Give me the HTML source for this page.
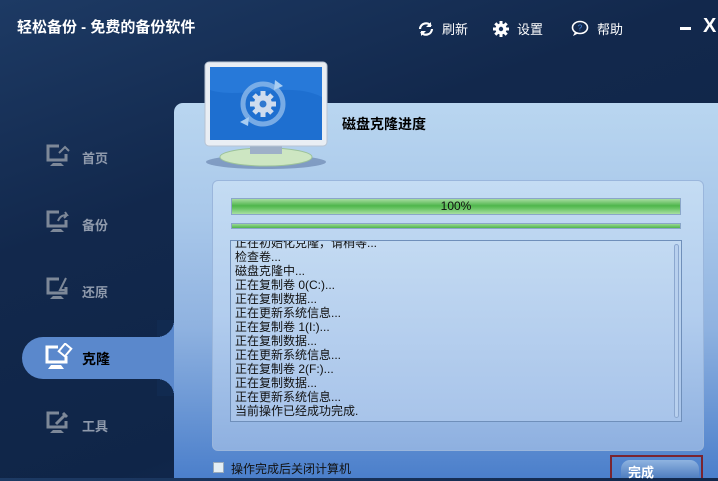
<!DOCTYPE html>
<html><head><meta charset="utf-8"><style>
*{margin:0;padding:0;box-sizing:border-box}
body{width:718px;height:478px;overflow:hidden;position:relative;font-family:"Liberation Sans","Noto Sans CJK SC","WenQuanYi Zen Hei",sans-serif;background:linear-gradient(160deg,#1d3a64 0%,#12284c 35%,#0f2548 70%,#183462 100%)}
.a{position:absolute}
.title{left:17px;top:16px;color:#fff;font-size:15px;font-weight:bold}
.tb{top:19px;color:#fff;font-size:13px}
.panel{left:174px;top:103px;width:544px;height:375px;border-radius:9px 0 0 0;background:linear-gradient(180deg,#b9d6f0 0%,#a9c8ea 30%,#8fb2e0 60%,#4b7fcb 100%)}
.inner{left:212px;top:180px;width:492px;height:271px;border-radius:6px;background:linear-gradient(180deg,#c4dcf3 0%,#b2cdee 50%,#8eb0e0 100%);border:1px solid #9ab6dc}
.nav{left:47px;color:#8f9aac;font-size:13px;font-weight:bold}
.log{left:230px;top:240px;width:452px;height:182px;border:1px solid #6f8fba;background:linear-gradient(180deg,#c3daf2,#a8c4ea);overflow:hidden}
.log div{font-size:12px;line-height:14px;color:#111;padding-left:4px;white-space:nowrap}
</style></head><body>
<div class="a title">轻松备份 - 免费的备份软件</div>
<svg class="a" style="left:417px;top:20px" width="18" height="18" viewBox="0 0 18 18"><path d="M3 9a6 6 0 0 1 11-3M15 9a6 6 0 0 1-11 3" stroke="#fff" stroke-width="2.2" fill="none"/><path d="M14 2v5h-5z M4 16v-5h5z" fill="#fff"/></svg>
<div class="a tb" style="left:442px">刷新</div>
<svg class="a" style="left:493px;top:21px" width="16" height="16" viewBox="0 0 16 16"><circle cx="8" cy="8" r="5.5" fill="#fff"/><g stroke="#fff" stroke-width="3"><path d="M8 0v16M0 8h16M2.3 2.3l11.4 11.4M13.7 2.3L2.3 13.7"/></g><circle cx="8" cy="8" r="2.2" fill="#1a3560"/></svg>
<div class="a tb" style="left:517px">设置</div>
<svg class="a" style="left:571px;top:20px" width="18" height="17" viewBox="0 0 18 17"><ellipse cx="9" cy="7.5" rx="7.5" ry="6" fill="none" stroke="#fff" stroke-width="1.6"/><path d="M4 12l-2 4 5-2.5" fill="#fff"/><text x="9" y="10.5" font-size="8" fill="#4a8ae0" text-anchor="middle">?</text></svg>
<div class="a tb" style="left:597px">帮助</div>
<div class="a" style="left:680px;top:27px;width:11px;height:3px;background:#fff"></div>
<div class="a" style="left:703px;top:15px;color:#fff;font-size:20px;font-weight:bold">X</div>

<div class="a panel"></div>
<div class="a" style="left:22px;top:337px;width:152px;height:42px;border-radius:21px 0 0 21px;background:#5a88cc"></div>
<div class="a" style="left:157px;top:320px;width:17px;height:17px;background:radial-gradient(circle at 0 0,#112a50 17px,#5a88cc 17px)"></div>
<div class="a" style="left:157px;top:379px;width:17px;height:17px;background:radial-gradient(circle at 0 100%,#112a50 17px,#5a88cc 17px)"></div>

<svg class="a" style="left:45px;top:143px" width="28" height="26" viewBox="0 0 28 26"><path d="M14 3H3v14h18v-6" fill="none" stroke="#7d8898" stroke-width="3"/><path d="M8 20h8l3 3H5z" fill="#7d8898"/><path d="M14 10l6-6 4 4" fill="none" stroke="#7d8898" stroke-width="2"/></svg>
<div class="a nav" style="left:82px;top:148px">首页</div>
<svg class="a" style="left:45px;top:209px" width="28" height="26" viewBox="0 0 28 26"><path d="M14 3H3v14h18v-6" fill="none" stroke="#7d8898" stroke-width="3"/><path d="M8 20h8l3 3H5z" fill="#7d8898"/><path d="M13 12c2-5 5-6 9-6l-2-3M22 6l-3 3" fill="none" stroke="#7d8898" stroke-width="2"/></svg>
<div class="a nav" style="left:82px;top:215px">备份</div>
<svg class="a" style="left:45px;top:276px" width="28" height="26" viewBox="0 0 28 26"><path d="M14 3H3v14h18v-6" fill="none" stroke="#7d8898" stroke-width="3"/><path d="M8 20h8l3 3H5z" fill="#7d8898"/><path d="M21 2l-6 12h5" fill="none" stroke="#7d8898" stroke-width="2"/></svg>
<div class="a nav" style="left:82px;top:282px">还原</div>
<svg class="a" style="left:44px;top:343px" width="30" height="28" viewBox="0 0 30 28"><path d="M14 4H3v15h19v-6" fill="none" stroke="#fff" stroke-width="3"/><path d="M7 22h10l3 4H4z" fill="#fff"/><rect x="17" y="2" width="8" height="10" transform="rotate(40 21 7)" fill="none" stroke="#fff" stroke-width="2"/></svg>
<div class="a" style="left:82px;top:349px;font-size:14px;font-weight:bold;color:#000">克隆</div>
<svg class="a" style="left:45px;top:410px" width="28" height="26" viewBox="0 0 28 26"><path d="M14 3H3v14h18v-6" fill="none" stroke="#7d8898" stroke-width="3"/><path d="M8 20h8l3 3H5z" fill="#7d8898"/><path d="M11 14l9-9M18 3l4 4" stroke="#7d8898" stroke-width="3"/></svg>
<div class="a nav" style="left:82px;top:416px">工具</div>

<svg class="a" style="left:200px;top:60px" width="132" height="112" viewBox="0 0 132 112">
<ellipse cx="66" cy="102" rx="60" ry="7" fill="#6c87b0" opacity=".7"/>
<ellipse cx="66" cy="97" rx="46" ry="9" fill="#cde6c2" stroke="#9cc29a"/>
<rect x="50" y="84" width="32" height="10" fill="#9eb0c8"/>
<rect x="5" y="2" width="122" height="84" rx="4" fill="#e9eef4" stroke="#b7c3d2"/>
<rect x="10" y="7" width="112" height="73" fill="#1e6fd0"/>
<path d="M10 7h112v30C90 20 40 40 10 30z" fill="#2d80e0" opacity=".6"/>
<circle cx="63" cy="44" r="20" fill="none" stroke="#8fbaea" stroke-width="5" opacity=".8"/>
<path d="M75 20l8 6-9 4z M48 66l-8-4 9-5z" fill="#a8cdf2"/>
<circle cx="63" cy="44" r="9" fill="#cfdcee"/>
<g stroke="#cfdcee" stroke-width="5"><path d="M63 31v26M50 44h26M54 35l18 18M72 35L54 53"/></g>
<circle cx="63" cy="44" r="3.5" fill="#2f78d0"/>
</svg>
<div class="a" style="left:342px;top:114px;font-size:14px;font-weight:bold;color:#000">磁盘克隆进度</div>

<div class="a inner"></div>
<div class="a" style="left:231px;top:198px;width:450px;height:17px;border:1px solid #8aa6c8;background:linear-gradient(180deg,#a7dca0 0%,#4fb64c 45%,#63c25f 60%,#a8dfa2 100%)"></div>
<div class="a" style="left:231px;top:199px;width:450px;text-align:center;font-size:12px;color:#111">100%</div>
<div class="a" style="left:231px;top:223px;width:450px;height:6px;border:1px solid #8aa6c8;background:linear-gradient(180deg,#9ad895,#4fb64c)"></div>
<div class="a log">
<div style="margin-top:-5px">正在初始化克隆，请稍等...</div>
<div>检查卷...</div><div>磁盘克隆中...</div><div>正在复制卷 0(C:)...</div><div>正在复制数据...</div><div>正在更新系统信息...</div><div>正在复制卷 1(I:)...</div><div>正在复制数据...</div><div>正在更新系统信息...</div><div>正在复制卷 2(F:)...</div><div>正在复制数据...</div><div>正在更新系统信息...</div><div>当前操作已经成功完成.</div>
</div>
<div class="a" style="left:674px;top:244px;width:5px;height:174px;border:1px solid #8ba7cf;border-radius:3px;background:#b8d0ee"></div>
<div class="a" style="left:213px;top:462px;width:11px;height:11px;border:1px solid #9ab;background:#e4eef4"></div>
<div class="a" style="left:231px;top:460px;font-size:12px;color:#111">操作完成后关闭计算机</div>
<div class="a" style="left:610px;top:455px;width:93px;height:23px;border:2px solid #7a2430;border-bottom:none"></div>
<div class="a" style="left:621px;top:460px;width:78px;height:18px;border-radius:9px 9px 0 0;background:linear-gradient(180deg,#8fb3e0,#4f7ec0);color:#fff;font-size:13px;font-weight:bold;padding:2px 0 0 7px">完成</div>
</body></html>
